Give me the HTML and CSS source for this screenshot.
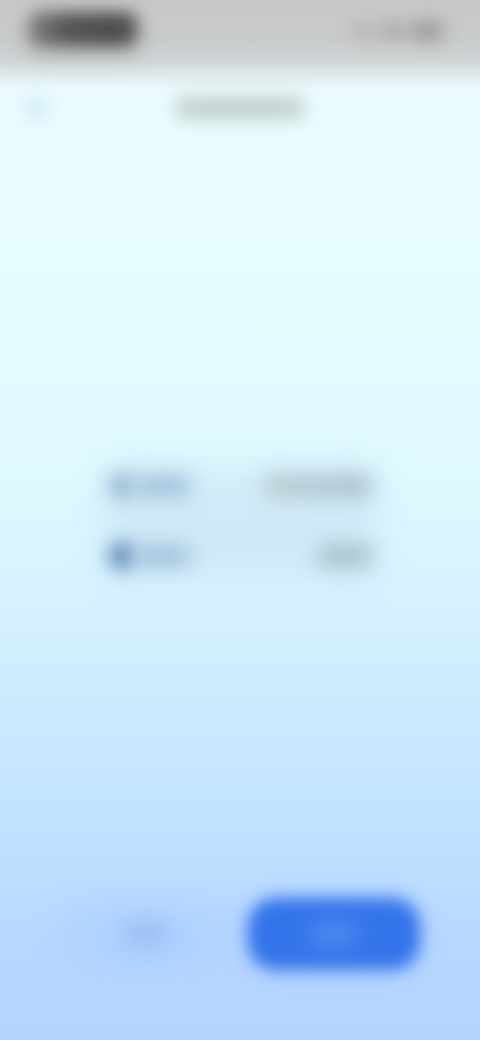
FILE: index.html
```
<!DOCTYPE html>
<html lang="en">
<head>
    <meta charset="UTF-8" />
    <meta name="viewport" content="width=device-width, initial-scale=1" />
    <title>Details</title>
    <link rel="stylesheet" href="styles.css">
</head>
<body>

<div class="status-bar">
    <div class="status-pill"></div>
    <div class="status-icons">
        <span class="signal"></span>
        <span class="wifi"></span>
        <span class="battery"></span>
    </div>
</div>

<header class="nav">
    <button class="back" aria-label="Back"></button>
    <div class="nav-title"></div>
</header>

<main class="content">
    <div class="panel">
        <div class="row">
            <span class="dot"></span>
            <span class="label"></span>
            <span class="value value-long"></span>
        </div>
        <div class="row">
            <span class="dot dot-dark"></span>
            <span class="label"></span>
            <span class="value"></span>
        </div>
    </div>
</main>

<footer class="actions">
    <button class="btn btn-secondary" aria-label="Secondary action"><span class="btn-mark"></span></button>
    <button class="btn btn-primary" aria-label="Primary action"><span class="btn-mark"></span></button>
</footer>

</body>
</html>
```

FILE: styles.css
```
* {
    box-sizing: border-box;
}

body {
    margin: 0;
    min-height: 100vh;
    display: flex;
    flex-direction: column;
    overflow-x: hidden;
    font-family: Inter, "Liberation Sans", sans-serif;
    background: linear-gradient(#ecfbfd 0%, #eafdff 16%, #e4fbff 34%, #dff9ff 45%, #d8f3ff 56%, #cceaff 68%, #c2e1ff 80%, #b9d8ff 90%, #b3d4ff 100%);
}

button {
    border: none;
    padding: 0;
    background: none;
    cursor: pointer;
}

/* status bar */
.status-bar {
    display: flex;
    justify-content: space-between;
    align-items: flex-start;
    height: 90px;
    padding: 12px 36px 0 28px;
    background: linear-gradient(#c7c8ca 0, #c9cbcd 40px, #d0d4d5 60px, #dfe8e9 74px, rgba(232, 249, 251, 0) 90px);
}

.status-pill {
    width: 110px;
    height: 34px;
    border-radius: 12px;
    background: linear-gradient(90deg, #858583, #555553 35%, #4c4c4b 80%, #5c5c5a);
    box-shadow: 0 6px 20px rgba(110, 115, 115, 0.4);
    filter: blur(8px);
}

.status-icons {
    display: flex;
    align-items: center;
    gap: 6px;
    height: 38px;
    filter: blur(9px);
}

.signal,
.wifi,
.battery {
    width: 24px;
    height: 14px;
    border-radius: 6px;
    background: #b0b0b1;
}

.wifi {
    height: 18px;
    background: #a6a6a7;
}

.battery {
    width: 34px;
    height: 20px;
    background: #9b9c9d;
}

/* navigation */
.nav {
    display: grid;
    grid-template-columns: 1fr auto 1fr;
    align-items: center;
    height: 54px;
    padding: 0 24px 18px;
}

.back {
    width: 26px;
    height: 26px;
    border-radius: 50%;
    background: #d3eaf8;
    filter: blur(9px);
}

.nav-title {
    width: 128px;
    height: 18px;
    border-radius: 6px;
    background: #bccaca;
    box-shadow: 0 0 20px rgba(200, 218, 218, 0.6);
    filter: blur(9px);
}

/* details */
.content {
    flex: 1;
    display: flex;
    flex-direction: column;
    justify-content: center;
    padding: 0 100px;
}

.panel {
    position: relative;
    z-index: 0;
    display: flex;
    flex-direction: column;
    gap: 40px;
    padding: 20px 8px;
}

/* soft tint under the rows */
.panel::before {
    content: "";
    position: absolute;
    inset: 16px 4px;
    z-index: -1;
    background: rgba(184, 208, 230, 0.32);
    filter: blur(18px);
}

.row {
    display: flex;
    align-items: center;
    height: 30px;
}

.dot {
    width: 28px;
    height: 28px;
    border-radius: 50%;
    background: #9dbcd6;
    filter: blur(9px);
}

.dot-dark {
    background: #6990bb;
}

.label {
    width: 54px;
    height: 22px;
    border-radius: 6px;
    background: #a3c1dc;
    filter: blur(10px);
}

.value {
    width: 54px;
    height: 24px;
    margin-left: auto;
    border-radius: 6px;
    background: #abc3cd;
    filter: blur(10px);
}

.value-long {
    width: 108px;
    background: linear-gradient(90deg, #b9cdd4, #abc2cc);
}

/* bottom buttons */
.actions {
    display: flex;
    gap: 16px;
    padding: 0 60px 70px;
}

.btn {
    position: relative;
    z-index: 0;
    flex: 1;
    display: flex;
    align-items: center;
    justify-content: center;
    height: 72px;
}

.btn::before {
    content: "";
    position: absolute;
    inset: 0;
    z-index: -1;
    border-radius: 28px;
}

.btn-secondary::before {
    background: rgba(160, 200, 255, 0.35);
    filter: blur(16px);
}

.btn-primary::before {
    background: #3474ea;
    box-shadow: 0 0 24px rgba(100, 155, 255, 0.35);
    filter: blur(8px);
}

.btn-mark {
    width: 44px;
    height: 18px;
    border-radius: 6px;
    background: #8eb6ee;
    filter: blur(12px);
}

.btn-primary .btn-mark {
    background: #5c94f5;
}
```
